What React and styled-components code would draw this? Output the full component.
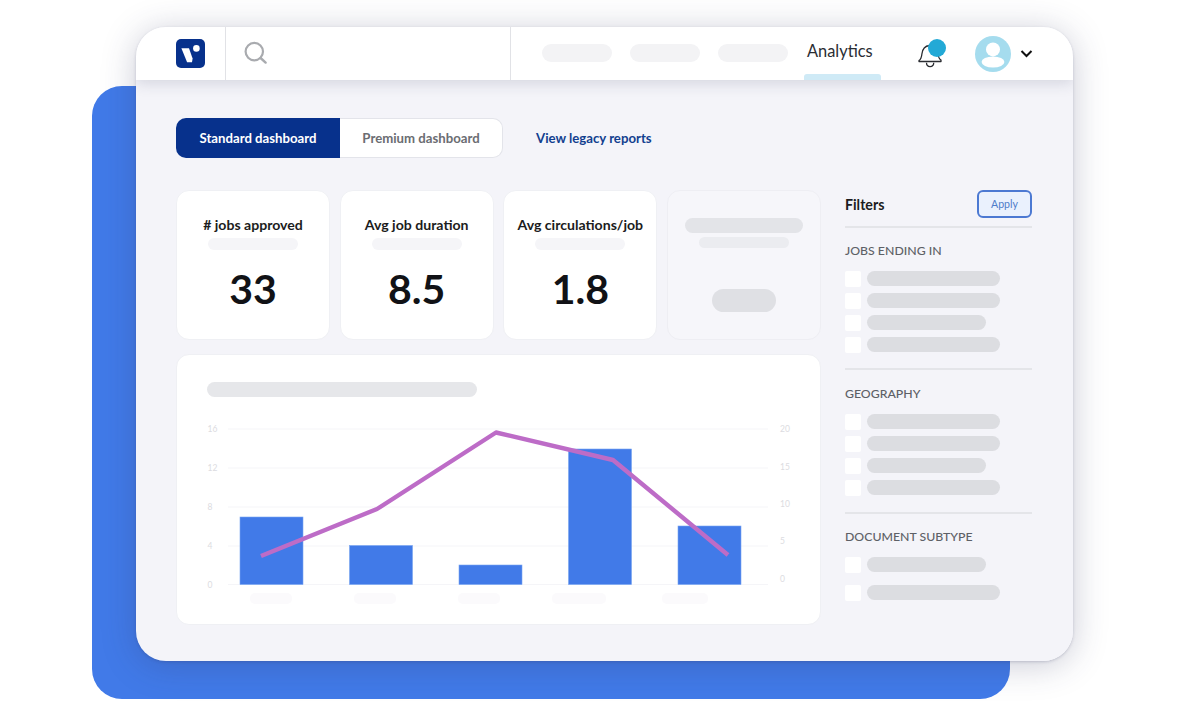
import React from "react";
import styled, { createGlobalStyle } from "styled-components";

const Global = createGlobalStyle`
  html, body { margin: 0; padding: 0; background: #fff; }
  body { font-family: "Lato", "Liberation Sans", sans-serif; }
`;

const Scene = styled.div`
  position: relative;
  width: 1200px;
  height: 720px;
  overflow: hidden;
  background: #fff;
  padding: 27px 0 0 136px;
  box-sizing: border-box;
`;

const BackPanel = styled.div`
  position: absolute;
  left: 92px;
  top: 86px;
  width: 918px;
  height: 613px;
  border-radius: 30px;
  background: #417ae8;
`;

const Window = styled.div`
  position: relative;
  width: 937px;
  height: 634px;
  border-radius: 30px;
  background: #f4f4f9;
  overflow: hidden;
`;

const WindowShadow = styled.div`
  position: absolute;
  left: 136px;
  top: 27px;
  width: 937px;
  height: 634px;
  border-radius: 30px;
  box-shadow: 0 4px 34px rgba(50, 55, 95, 0.26), 0 1px 3px rgba(50, 55, 95, 0.22);
`;

const Header = styled.header`
  display: flex;
  align-items: stretch;
  height: 53px;
  background: #fff;
  box-shadow: 0 3px 14px rgba(40, 45, 80, 0.16);
  position: relative;
`;

const LogoCell = styled.div`
  flex: none;
  width: 90px;
  display: flex;
  align-items: center;
  padding: 0 0 1px 40px;
  box-sizing: border-box;
  border-right: 1px solid #e1e2e6;
`;

const SearchCell = styled.div`
  flex: none;
  width: 285px;
  display: flex;
  align-items: center;
  padding: 0 0 4px 18px;
  box-sizing: border-box;
  border-right: 1px solid #e1e2e6;
`;

const Nav = styled.nav`
  display: flex;
  align-items: center;
  padding-left: 31px;
  flex: 1;
  padding-bottom: 2px;
`;

const NavPills = styled.div`
  display: flex;
  gap: 18px;
`;

const NavPill = styled.div`
  width: 70px;
  height: 18px;
  border-radius: 9px;
  background: #f3f3f5;
`;

const NavActive = styled.div`
  position: relative;
  margin: -3px 0 0 19px;
  font-size: 16.4px;
  line-height: 20px;
  color: #2a2d33;
  width: 70px;
  flex: none;
  white-space: nowrap;

  &::after {
    content: "";
    position: absolute;
    left: -3px;
    top: 33px;
    width: 77px;
    height: 6px;
    border-radius: 3px 3px 0 0;
    background: #cfeaf6;
  }
`;

const BellWrap = styled.div`
  margin: 2px 0 0 41px;
  position: relative;
  flex: none;
  width: 26px;
  height: 30px;
`;

const BellDot = styled.span`
  position: absolute;
  left: 10px;
  top: 0;
  width: 18px;
  height: 18px;
  border-radius: 50%;
  background: #23a9d6;
`;

const Avatar = styled.div`
  margin: 2px 0 0 31px;
  flex: none;
  width: 36px;
  height: 36px;
`;

const Chev = styled.div`
  margin: 2px 0 0 9px;
  flex: none;
  width: 13px;
  height: 9px;
  display: flex;
`;

const Body = styled.main`
  padding: 38px 41px 0 40px;
`;

const TabRow = styled.div`
  display: flex;
  align-items: center;
`;

const Tab = styled.div`
  height: 40px;
  box-sizing: border-box;
  display: flex;
  align-items: center;
  justify-content: center;
  padding-bottom: 1px;
  font-size: 13.2px;
  font-weight: 700;
  width: ${(p) => (p.$active ? "164px" : "163px")};
  color: ${(p) => (p.$active ? "#fff" : "#6b6d72")};
  background: ${(p) => (p.$active ? "#07318c" : "#fff")};
  border: ${(p) => (p.$active ? "none" : "1px solid #e3e4ea")};
  border-left: none;
  border-radius: ${(p) => (p.$active ? "10px 0 0 10px" : "0 10px 10px 0")};
`;

const LegacyLink = styled.a`
  margin: -1px 0 0 33px;
  font-size: 13.2px;
  font-weight: 700;
  color: #123f8f;
`;

const Columns = styled.div`
  display: grid;
  grid-template-columns: 645px 187px;
  column-gap: 24px;
  margin-top: 32px;
`;

const LeftCol = styled.div`
  display: flex;
  flex-direction: column;
  gap: 14px;
`;

const Cards = styled.div`
  display: grid;
  grid-template-columns: repeat(4, 154px);
  justify-content: space-between;
`;

const Card = styled.section`
  height: 150px;
  box-sizing: border-box;
  border-radius: 13px;
  border: 1px solid ${(p) => (p.$ghost ? "#eeeef3" : "#eff0f4")};
  background: ${(p) => (p.$ghost ? "#f6f6fa" : "#fff")};
  display: flex;
  flex-direction: column;
  align-items: center;
  padding-top: ${(p) => (p.$ghost ? "27px" : "24px")};
`;

const CardTitle = styled.div`
  font-size: 14.1px;
  line-height: 20px;
  font-weight: 700;
  color: #1b1c20;
  white-space: nowrap;
`;

const Skeleton = styled.div`
  width: ${(p) => p.$w}px;
  height: ${(p) => p.$h}px;
  border-radius: ${(p) => p.$h / 2}px;
  background: ${(p) => p.$c};
  margin-top: ${(p) => p.$mt || 0}px;
  flex: none;
`;

const CardValue = styled.div`
  font-size: 41px;
  line-height: 48px;
  font-weight: 700;
  color: #111216;
  margin-top: 15px;
`;

const ChartCard = styled.section`
  height: 271px;
  box-sizing: border-box;
  border-radius: 13px;
  border: 1px solid #eff0f4;
  background: #fff;
  padding: 27px 0 0 30px;
`;

const ChartSvg = styled.svg`
  display: block;
  margin: 0;
`;

const FilterCol = styled.aside`
  display: flex;
  flex-direction: column;
`;

const FilterHead = styled.div`
  display: flex;
  align-items: center;
  justify-content: space-between;
  height: 28px;
  padding-bottom: 8px;
  border-bottom: 2px solid #e4e5e9;
`;

const FilterTitle = styled.div`
  font-size: 14.2px;
  line-height: 18px;
  margin-top: 2px;
  font-weight: 700;
  color: #1b1c20;
`;

const ApplyBtn = styled.button`
  width: 55px;
  height: 28px;
  border-radius: 6px;
  border: 2px solid #4c79d2;
  background: #eaf1fd;
  color: #4f7cc9;
  font-family: inherit;
  font-size: 10.6px;
  padding: 0;
`;

const Group = styled.div`
  padding: ${(p) => p.$pt}px 0 ${(p) => p.$pb}px;
  border-bottom: ${(p) => (p.$last ? "none" : "2px solid #e4e5e9")};
`;

const GroupTitle = styled.div`
  font-size: 12.3px;
  line-height: 18px;
  font-weight: 500;
  color: #5d6066;
  margin-bottom: 10px;
`;

const FilterRow = styled.div`
  display: flex;
  align-items: center;
  gap: 6px;
  height: 17px;
  margin-bottom: ${(p) => p.$gap}px;
`;

const Check = styled.div`
  width: 16px;
  height: 16px;
  border-radius: 2px;
  background: #fff;
`;

const RowPill = styled.div`
  width: ${(p) => p.$w}px;
  height: 15px;
  border-radius: 8px;
  background: #dcdde1;
`;

const Logo = () => (
  <svg width="29" height="29" viewBox="0 0 29 29">
    <rect width="29" height="29" rx="5" fill="#07318c" />
    <path d="M5.4 9.3h7.6l3.6 10.2-.6 3.8h-4.9z" fill="#fff" />
    <circle cx="20.4" cy="9.4" r="3.3" fill="#fff" />
  </svg>
);

const SearchIcon = () => (
  <svg width="24" height="24" viewBox="0 0 24 24" fill="none">
    <circle cx="10.3" cy="11.6" r="8.7" stroke="#a9abaf" strokeWidth="2.2" />
    <path d="M16.6 18l5 4.6" stroke="#a9abaf" strokeWidth="2.4" strokeLinecap="round" />
  </svg>
);

const Bell = () => (
  <svg width="26" height="30" viewBox="0 0 26 30" fill="none" stroke="#2a2c31" strokeWidth="1.3" strokeLinejoin="round">
    <path d="M1 21.5c2.2-1.4 2.6-3.5 2.9-6.5.5-4.6 2.8-8 7.6-8.5s8 3.2 8.5 8c.3 3 1 5.4 3 6.6v1.4H1z" />
    <path d="M8.5 23.8c0 2.6 1.6 3.8 3.6 3.8s3.6-1.2 3.6-3.8" />
  </svg>
);

const AvatarIcon = () => (
  <svg width="36" height="36" viewBox="0 0 36 36">
    <circle cx="18" cy="18" r="18" fill="#a5dcee" />
    <circle cx="18" cy="13.4" r="7" fill="#fff" />
    <ellipse cx="18" cy="26" rx="11.4" ry="5.6" fill="#fff" />
  </svg>
);

const Chevron = () => (
  <svg width="13" height="9" viewBox="0 0 13 9" fill="none">
    <path d="M1.5 2l5 5 5-5" stroke="#111" strokeWidth="2" />
  </svg>
);

const bars = [
  { x: 63, top: 162 },
  { x: 172.5, top: 190.5 },
  { x: 282, top: 210 },
  { x: 391.5, top: 94 },
  { x: 501, top: 171 },
];
const BASE = 229.5;
const gridY = [74, 113, 152, 191, 229.5];
const leftLabels = ["16", "12", "8", "4", "0"];
const rightLabels = [["20", 74], ["15", 111.5], ["10", 149], ["5", 186], ["0", 224]];
const xPills = [[73, 42], [177, 42], [281, 42], [375, 54], [485, 46]];

const Chart = () => (
  <ChartSvg width="614" height="227" viewBox="30 42 614 227">
    {gridY.map((y) => (
      <line key={y} x1="51" x2="591" y1={y} y2={y} stroke="#f5f5f8" strokeWidth="1" />
    ))}
    {leftLabels.map((t, i) => (
      <text key={t} x="30.5" y={gridY[i] + 3} fontSize="8.5" fontFamily="Lato" fill="#dcdce1">{t}</text>
    ))}
    {rightLabels.map(([t, y]) => (
      <text key={t} x="603" y={y + 3} fontSize="8.5" fontFamily="Lato" fill="#dcdce1">{t}</text>
    ))}
    {bars.map((b) => (
      <rect key={b.x} x={b.x} y={b.top} width="63" height={BASE - b.top} fill="#417ae8" stroke="#79a5f0" strokeWidth="0.6" />
    ))}
    <polyline
      points="84,201 200,154 319,77.5 436,105 551,200"
      fill="none"
      stroke="#bd6cc7"
      strokeWidth="4.4"
      strokeLinejoin="round"
    />
    {xPills.map(([x, w]) => (
      <rect key={x} x={x} y="238" width={w} height="11" rx="5" fill="#fbfafc" />
    ))}
  </ChartSvg>
);

const filters = [
  { title: "JOBS ENDING IN", rows: [133, 133, 119, 133], gap: 5, pt: 14, pb: 15 },
  { title: "GEOGRAPHY", rows: [133, 133, 119, 133], gap: 5, pt: 15, pb: 16 },
  { title: "DOCUMENT SUBTYPE", rows: [119, 133], gap: 11, pt: 14, pb: 0, last: true },
];

const cards = [
  { title: "# jobs approved", value: "33" },
  { title: "Avg job duration", value: "8.5" },
  { title: "Avg circulations/job", value: "1.8" },
];

export default function App() {
  return (
    <>
      <Global />
      <Scene>
        <BackPanel />
        <WindowShadow />
        <Window>
          <Header>
            <LogoCell><Logo /></LogoCell>
            <SearchCell><SearchIcon /></SearchCell>
            <Nav>
              <NavPills>
                <NavPill />
                <NavPill />
                <NavPill />
              </NavPills>
              <NavActive>Analytics</NavActive>
              <BellWrap><Bell /><BellDot /></BellWrap>
              <Avatar><AvatarIcon /></Avatar>
              <Chev><Chevron /></Chev>
            </Nav>
          </Header>
          <Body>
            <TabRow>
              <Tab $active>Standard dashboard</Tab>
              <Tab>Premium dashboard</Tab>
              <LegacyLink>View legacy reports</LegacyLink>
            </TabRow>
            <Columns>
              <LeftCol>
                <Cards>
                  {cards.map((c) => (
                    <Card key={c.title}>
                      <CardTitle>{c.title}</CardTitle>
                      <Skeleton $w={90} $h={12} $c="#f5f5f8" $mt={3} />
                      <CardValue>{c.value}</CardValue>
                    </Card>
                  ))}
                  <Card $ghost>
                    <Skeleton $w={118} $h={15} $c="#e3e4e8" />
                    <Skeleton $w={90} $h={11} $c="#ebecf0" $mt={4} />
                    <Skeleton $w={64} $h={23} $c="#dfe0e4" $mt={41} />
                  </Card>
                </Cards>
                <ChartCard>
                  <Skeleton $w={270} $h={15} $c="#e6e7ea" />
                  <Chart />
                </ChartCard>
              </LeftCol>
              <FilterCol>
                <FilterHead>
                  <FilterTitle>Filters</FilterTitle>
                  <ApplyBtn>Apply</ApplyBtn>
                </FilterHead>
                {filters.map((g) => (
                  <Group key={g.title} $last={g.last} $pt={g.pt} $pb={g.pb}>
                    <GroupTitle>{g.title}</GroupTitle>
                    {g.rows.map((w, i) => (
                      <FilterRow key={i} $gap={i === g.rows.length - 1 ? 0 : g.gap}>
                        <Check />
                        <RowPill $w={w} />
                      </FilterRow>
                    ))}
                  </Group>
                ))}
              </FilterCol>
            </Columns>
          </Body>
        </Window>
      </Scene>
    </>
  );
}
